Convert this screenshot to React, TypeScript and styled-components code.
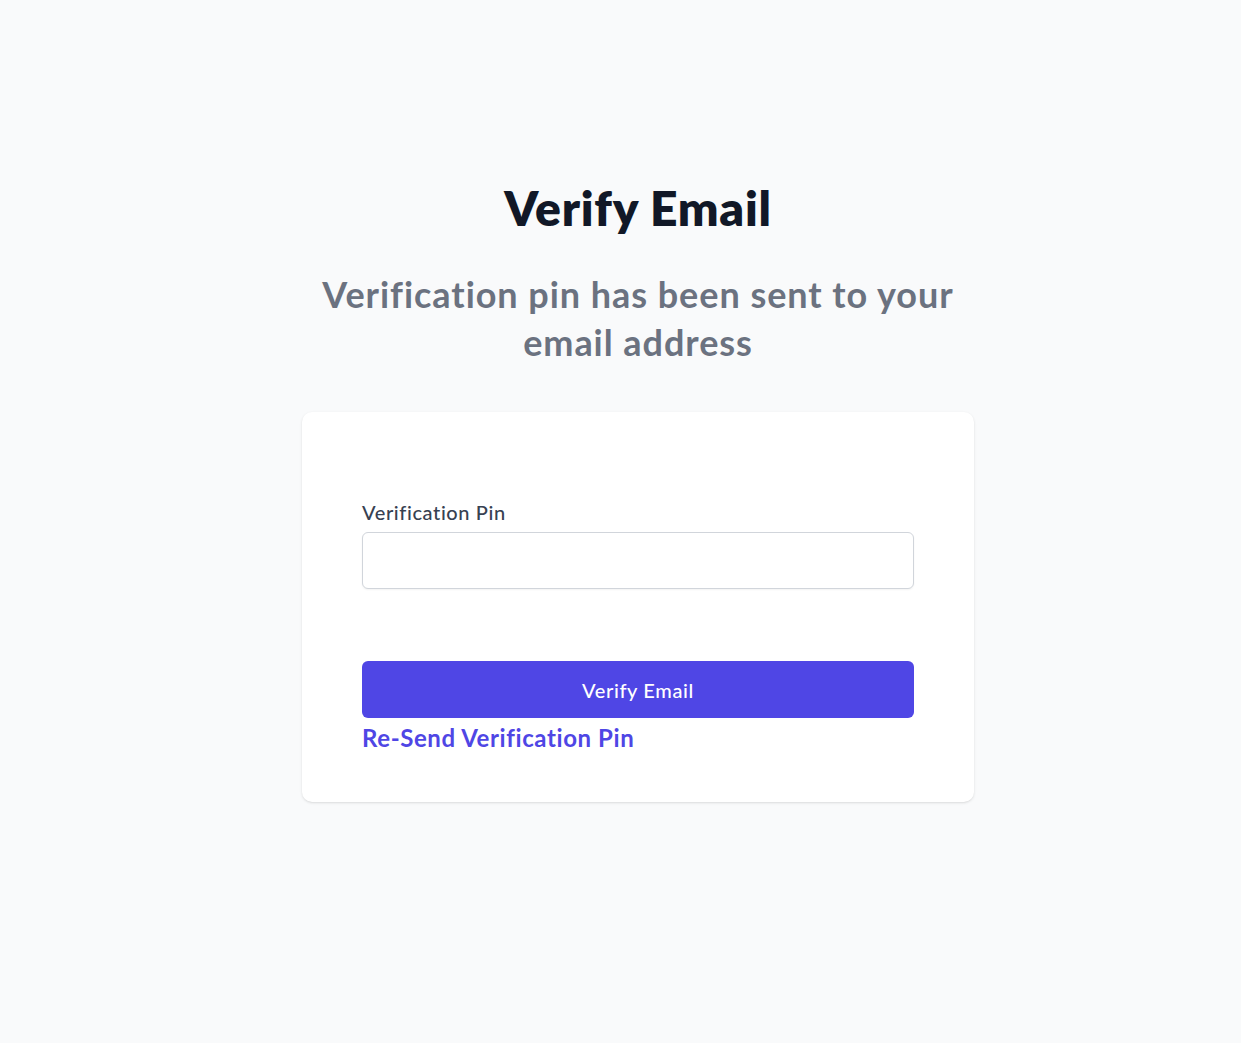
import styled, { createGlobalStyle } from 'styled-components';

const GlobalStyle = createGlobalStyle`
  html, body {
    margin: 0;
    padding: 0;
    background-color: #f9fafb;
    font-family: Lato, 'Noto Sans', sans-serif;
    font-variant-ligatures: none;
  }
  * {
    box-sizing: border-box;
  }
`;

const StyledPage = styled.div`
  min-height: 1043px;
  display: flex;
  flex-flow: column;
  align-items: center;
  padding: 184px 0 0 35px;
`;

const StyledTitle = styled.h1`
  margin: 0;
  font-size: 48px;
  line-height: 48px;
  font-weight: 800;
  letter-spacing: 0.75px;
  color: #111827;
  text-align: center;
`;

const StyledSubtitle = styled.h2`
  margin: 38px 0 0;
  width: 672px;
  font-size: 36px;
  line-height: 48px;
  font-weight: 700;
  letter-spacing: 0.95px;
  color: #6b7280;
  text-align: center;
`;

const StyledCard = styled.div`
  margin-top: 46px;
  width: 672px;
  background-color: #ffffff;
  border-radius: 10px;
  box-shadow: 0 1px 3px rgba(0, 0, 0, 0.1), 0 1px 2px -1px rgba(0, 0, 0, 0.1);
  padding: 86px 60px 48px;
`;

const StyledForm = styled.form`
  display: flex;
  flex-flow: column;
`;

const StyledLabel = styled.label`
  font-size: 20px;
  line-height: 28px;
  font-weight: 500;
  letter-spacing: 0.6px;
  color: #374151;
`;

const StyledInput = styled.input`
  margin-top: 6px;
  height: 57px;
  width: 100%;
  border: solid 1px #d1d5db;
  border-radius: 6px;
  box-shadow: 0 1px 2px rgba(0, 0, 0, 0.05);
  padding: 0 16px;
  font-size: 20px;
  font-family: inherit;
  outline: none;
`;

const StyledButton = styled.button`
  margin-top: 72px;
  height: 57px;
  width: 100%;
  border: none;
  border-radius: 6px;
  background-color: #4f46e5;
  color: #ffffff;
  font-family: inherit;
  font-size: 20px;
  font-weight: 500;
  letter-spacing: 0.65px;
  cursor: pointer;
  &:hover {
    background-color: #4338ca;
  }
`;

const StyledResendLink = styled.a`
  margin-top: 4px;
  font-size: 24px;
  line-height: 32px;
  font-weight: 700;
  letter-spacing: 0.6px;
  color: #4f46e5;
  text-decoration: none;
  cursor: pointer;
  align-self: flex-start;
`;

const App = () => {
  return (
    <>
      <GlobalStyle />
      <StyledPage>
        <StyledTitle>Verify Email</StyledTitle>
        <StyledSubtitle>
          Verification pin has been sent to your email address
        </StyledSubtitle>
        <StyledCard>
          <StyledForm onSubmit={e => e.preventDefault()}>
            <StyledLabel htmlFor="pin">Verification Pin</StyledLabel>
            <StyledInput id="pin" name="pin" type="text" />
            <StyledButton type="submit">Verify Email</StyledButton>
            <StyledResendLink>Re-Send Verification Pin</StyledResendLink>
          </StyledForm>
        </StyledCard>
      </StyledPage>
    </>
  );
};

export default App;
